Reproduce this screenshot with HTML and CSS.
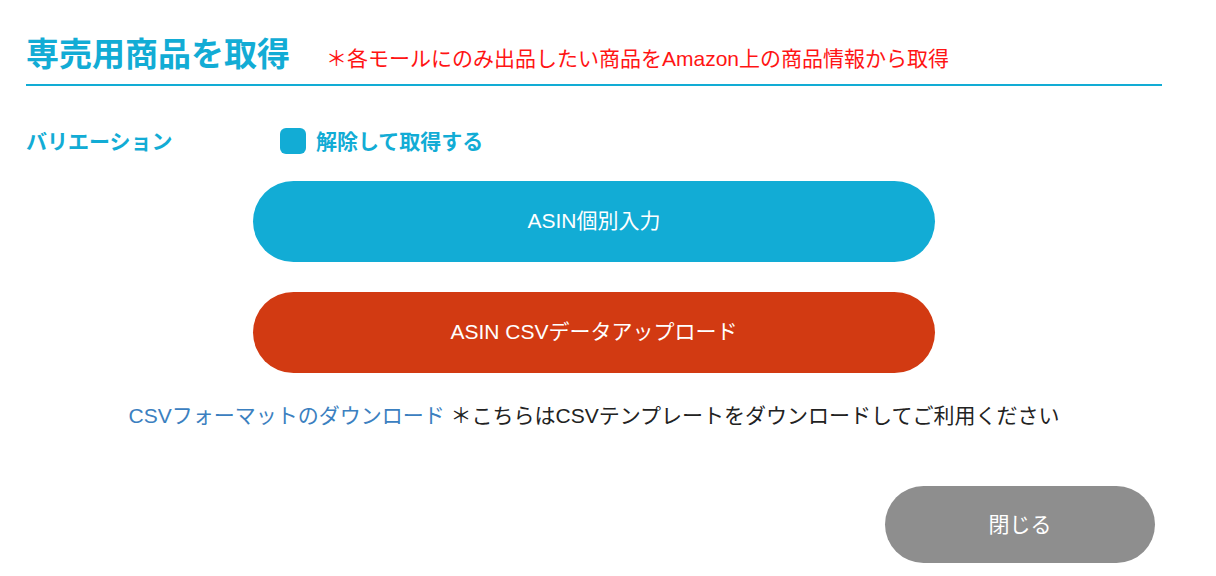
FILE: index.html
```html
<!DOCTYPE html>
<html lang="ja">
<head>
<meta charset="utf-8">
<title>専売用商品を取得</title>
<link rel="stylesheet" href="styles.css">
</head>
<body>
<div class="modal">
  <div class="header">
    <h1 class="title">専売用商品を取得</h1>
    <span class="note">＊各モールにのみ出品したい商品をAmazon上の商品情報から取得</span>
  </div>
  <div class="option-row">
    <div class="option-label">バリエーション</div>
    <label class="check">
      <span class="check-box"></span>
      <span class="check-text">解除して取得する</span>
    </label>
  </div>
  <div class="actions">
    <button class="btn btn-blue">ASIN個別入力</button>
    <button class="btn btn-red">ASIN CSVデータアップロード</button>
  </div>
  <p class="download"><a class="download-link" href="#">CSVフォーマットのダウンロード</a> ＊こちらはCSVテンプレートをダウンロードしてご利用ください</p>
  <div class="footer">
    <button class="btn-close">閉じる</button>
  </div>
</div>
</body>
</html>
```
FILE: styles.css
```css
* { box-sizing: border-box; }
html, body { margin: 0; padding: 0; background: #fff; }
body {
  font-family: "Liberation Sans", "Noto Sans CJK JP", sans-serif;
  color: #222;
}
.modal {
  width: 1136px;
  margin-left: 26px;
}
.header {
  display: flex;
  align-items: baseline;
  padding-top: 28px;
  padding-bottom: 8px;
  border-bottom: 2px solid #12acd5;
}
.title {
  margin: 0;
  font-size: 33px;
  line-height: 48px;
  font-weight: 700;
  color: #12acd5;
  font-family: "Noto Sans CJK JP", sans-serif;
}
.note {
  margin-left: 36px;
  font-size: 21px;
  color: #ff1414;
}
.option-row {
  display: flex;
  align-items: center;
  height: 26px;
  margin-top: 42px;
}
.option-label {
  width: 254px;
  font-size: 21px;
  line-height: 26px;
  font-weight: 700;
  color: #12acd5;
  font-family: "Noto Sans CJK JP", sans-serif;
  padding-bottom: 2px;
}
.check {
  display: flex;
  align-items: center;
  gap: 10px;
}
.check-box {
  width: 26px;
  height: 26px;
  border-radius: 6px;
  background: #12acd5;
}
.check-text {
  font-size: 21px;
  line-height: 26px;
  font-weight: 700;
  color: #12acd5;
  font-family: "Noto Sans CJK JP", sans-serif;
  padding-bottom: 2px;
}
.actions {
  display: flex;
  flex-direction: column;
  align-items: center;
  gap: 30px;
  margin-top: 27px;
}
.btn {
  width: 682px;
  height: 81px;
  border: none;
  border-radius: 41px;
  color: #fff;
  font-family: "Liberation Sans", "Noto Sans CJK JP", sans-serif;
  font-size: 21px;
  padding: 0 0 5px;
}
.btn-blue { background: #12acd5; }
.btn-red { background: #d23a12; }
.download {
  margin: 28px 0 0;
  text-align: center;
  font-size: 21px;
  line-height: 30px;
  color: #222;
}
.download-link {
  color: #3b80c0;
  text-decoration: none;
}
.footer {
  display: flex;
  justify-content: flex-end;
  padding-right: 7px;
  margin-top: 55px;
}
.btn-close {
  width: 270px;
  height: 77px;
  border: none;
  border-radius: 39px;
  background: #8e8e8e;
  color: #fff;
  font-family: "Liberation Sans", "Noto Sans CJK JP", sans-serif;
  font-size: 21px;
  padding: 0 0 3px;
}
```
